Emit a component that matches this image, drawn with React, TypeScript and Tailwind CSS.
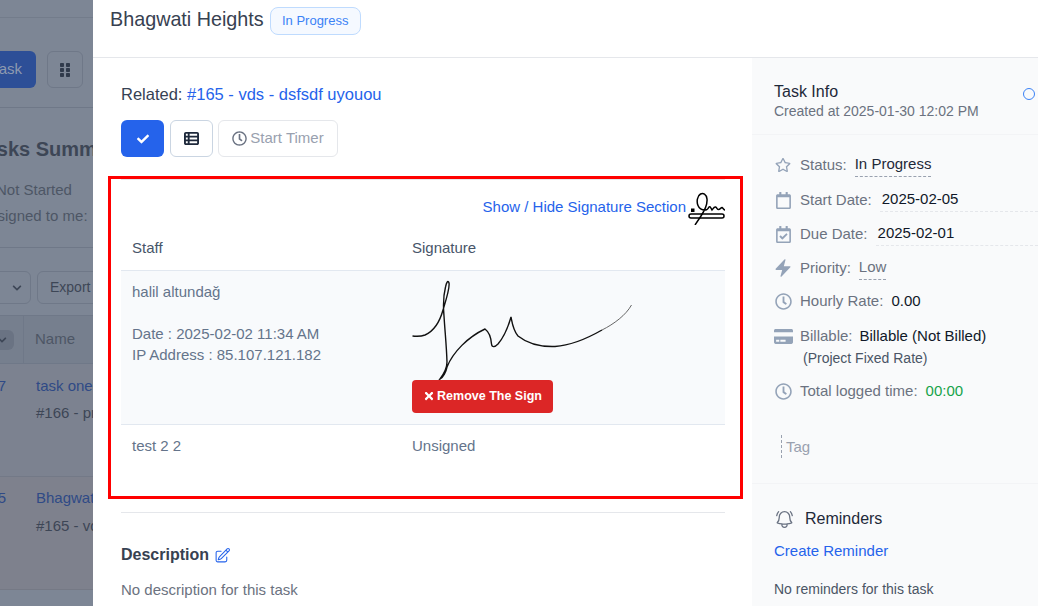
import {
  FaCheck,
  FaChevronDown,
  FaCreditCard,
  FaGripVertical,
  FaRegCalendar,
  FaRegCalendarCheck,
  FaRegClock,
  FaRegStar,
  FaTimes,
} from "react-icons/fa";
import { FaTableList } from "react-icons/fa6";
import { HiBolt, HiOutlineBellAlert, HiOutlinePencilSquare } from "react-icons/hi2";

function PageBehind() {
  return (
    <div className="w-[93px] shrink-0 h-full overflow-hidden bg-[#7d8695] text-[#3d4656] text-[15px]">
      <div className="w-[330px] -ml-[30px] flex flex-col">
        <div className="h-[18px] border-b border-[#737c8b]" />
        <div className="h-[90px] border-b border-[#6f7888] flex items-start pt-[33px] gap-[11px] justify-end pr-[217px]">
          <div className="w-[66px] h-[37px] rounded-md bg-[#2d4f97] text-[#8d9ab0] flex items-center justify-end pr-[14px]">
            Task
          </div>
          <div className="w-[36px] h-[37px] rounded-md border border-[#6f7888] flex items-center justify-center text-[#303a4b]">
            <FaGripVertical size={16} />
          </div>
        </div>
        <div className="h-[140px] border-b border-[#6f7888] pt-[29px]">
          <div className="pl-[5px] text-[20px] font-bold leading-6 whitespace-nowrap">Tasks Summary</div>
          <div className="pl-[26px] mt-[19px] leading-5 text-[#4d5665]">Not Started</div>
          <div className="pl-[10px] mt-[6px] leading-5 text-[#4d5665] whitespace-nowrap">Assigned to me:</div>
        </div>
        <div className="h-[67px] flex items-start pt-[23px] gap-[6px] pl-[4px]">
          <div className="w-[57px] h-[33px] rounded-md border border-[#6f7888] flex items-center justify-end pr-[8px]">
            <FaChevronDown size={10} />
          </div>
          <div className="w-[70px] h-[33px] rounded-md border border-[#6f7888] flex items-center pl-[12px] text-[14px]">
            Export
          </div>
        </div>
        <div className="h-[49px] bg-[#767f8e] border-y border-[#6f7888] flex">
          <div className="w-[54px] border-r border-[#6f7888] flex items-center justify-end pr-[9px]">
            <div className="w-[24px] h-[20px] rounded-md bg-[#6a7383] flex items-center justify-center">
              <FaChevronDown size={10} />
            </div>
          </div>
          <div className="pl-[11px] leading-[45px] text-[#4d5665]">Name</div>
        </div>
        <div className="h-[113px] border-b border-[#737987] bg-[#7c8290] flex pt-[12px]">
          <div className="w-[36px] text-right text-[#2f4a86] leading-5">167</div>
          <div className="pl-[30px] whitespace-nowrap">
            <div className="text-[#2f4a86] leading-5">task one</div>
            <div className="mt-[7px] leading-5">#166 - project</div>
          </div>
        </div>
        <div className="h-[113px] border-b border-[#757985] bg-[#7e818d] flex pt-[11px]">
          <div className="w-[36px] text-right text-[#2f4a86] leading-5">165</div>
          <div className="pl-[30px] whitespace-nowrap">
            <div className="text-[#2f4a86] leading-5">Bhagwati Heights</div>
            <div className="mt-[8px] leading-5">#165 - vds</div>
          </div>
        </div>
      </div>
    </div>
  );
}

function SignatureIcon() {
  return (
    <svg width="37" height="33" viewBox="0 0 37 33" fill="none" stroke="#000" strokeWidth="1.5" className="shrink-0">
      <rect x="1" y="22" width="35" height="4" rx="2" />
      <rect x="3" y="16.5" width="3.5" height="3.5" fill="#000" stroke="none" />
      <path d="M7 33 L13 24 C17 18 19.5 12 19 7 C18.5 2 15 0.5 12.5 2 C9 4 8.5 10 10 13.5 C11 16 14 18 17 18 C19 18.5 20 17 21 15 C22 14 23 16 24 18 C25 17 26 14.5 27.5 15 C29 15.5 29 17.5 30.5 17.5 C32 17.5 33 15.5 34 15.5 C35 16 36 18 37 18" />
    </svg>
  );
}

function SignatureDrawing() {
  return (
    <svg width="222" height="100" viewBox="0 0 222 100" fill="none" stroke="#111" strokeWidth="1.4" className="block">
      <path d="M0.5 56 C5 56.5 9 56.5 13 55 C22 51 28 41 31 30 C34 20 38 8 37 3 C36 0 34.5 2 33.5 7 C31 17 31 25 32 36 C33 52 34.5 66 35 82 C35 89 31 95 28 99 C31 98 34 92 35 87 C41 72 56 57 73 49 C77 52 79 57 79.5 64 C80 68 83 67 86 64 C92 57 97 44 99 37 C100 42 101 50 106 56 C116 64 128 67 143 66.5 C158 65.5 176 58 190 50" />
      <path d="M190 50 C202 44 214 35 219.5 25" stroke="#555" strokeWidth="0.9" />
    </svg>
  );
}

function SignatureBox() {
  return (
    <div className="-ml-[13px] -mr-[18px] mt-[19px] h-[323px] border-[3px] border-[#ff0000] pl-[10px] pr-[15px]">
      <div className="border-t border-gray-200" />
      <div className="h-[45px] flex items-start justify-end pt-[12px] gap-[2px]">
        <a className="text-[15px] leading-5 mt-[5px] text-[#2563eb]">Show / Hide Signature Section</a>
        <SignatureIcon />
      </div>
      <table className="w-full table-fixed text-[15px] text-[#64748b]">
        <thead>
          <tr className="h-[45px] border-b border-[#e2e8f0] text-[#475569]">
            <th className="w-[280px] pl-[11px] pt-[1px] font-normal text-left">Staff</th>
            <th className="pl-[11px] pt-[1px] font-normal text-left">Signature</th>
          </tr>
        </thead>
        <tbody>
          <tr className="bg-[#f8fafc] border-b border-[#e2e8f0]">
            <td className="h-[154px] align-top pl-[11px] pt-[10px] leading-[21px]">
              <div>halil altundağ</div>
              <div className="mt-[21px]">Date : 2025-02-02 11:34 AM</div>
              <div>IP Address : 85.107.121.182</div>
            </td>
            <td className="align-top pl-[11px] pt-[9px]">
              <SignatureDrawing />
              <button className="h-[33px] w-[141px] rounded bg-[#dc2626] text-white text-[12.5px] font-bold flex items-center justify-center gap-[2px]">
                <FaTimes size={12} />
                Remove The Sign
              </button>
            </td>
          </tr>
          <tr>
            <td className="pl-[11px] pt-[10px] leading-[21px] align-top">test 2 2</td>
            <td className="pl-[11px] pt-[10px] leading-[21px] align-top">Unsigned</td>
          </tr>
        </tbody>
      </table>
    </div>
  );
}

function InfoRow({
  icon,
  label,
  children,
  className,
}: {
  icon: React.ReactNode;
  label: string;
  children: React.ReactNode;
  className?: string;
}) {
  return (
    <div className={`h-5 flex items-center whitespace-nowrap ${className ?? ""}`}>
      <div className="w-[18px] mr-[8px] shrink-0 flex justify-center text-[#94a3b8]">{icon}</div>
      <span className="shrink-0 text-[#6b7280]">{label}</span>
      {children}
    </div>
  );
}

function TaskInfo() {
  return (
    <div className="w-[286px] shrink-0 h-full bg-[#f9fafb] text-[15px] overflow-hidden">
      <div className="h-[77px] border-b border-gray-100 pt-[24px] pl-[22px] pr-[3px] flex justify-between">
        <div>
          <div className="text-base leading-5 text-gray-800">Task Info</div>
          <div className="text-sm -mt-[1px] leading-5 text-[#6b7280]">Created at 2025-01-30 12:02 PM</div>
        </div>
        <div className="w-[12px] h-[12px] rounded-full border-[1.5px] border-[#3b82f6] mt-[6px]" />
      </div>
      <div className="pl-[22px] pt-[20px] flex flex-col gap-[14px] h-[349px] border-b border-gray-100">
        <InfoRow icon={<FaRegStar size={16} />} label="Status:" className="mb-[1px]">
          <span className="ml-[8px] text-gray-800 border-b border-dashed border-gray-400">In Progress</span>
        </InfoRow>
        <InfoRow icon={<FaRegCalendar size={17} />} label="Start Date:">
          <span className="ml-[8px] pl-[2px] flex-1 text-gray-900 border-b border-dashed border-gray-200">2025-02-05</span>
        </InfoRow>
        <InfoRow icon={<FaRegCalendarCheck size={17} />} label="Due Date:">
          <span className="ml-[8px] pl-[2px] flex-1 text-gray-900 border-b border-dashed border-gray-200">2025-02-01</span>
        </InfoRow>
        <InfoRow icon={<HiBolt size={20} className="shrink-0" />} label="Priority:">
          <span className="ml-[8px] text-[#6b7280] border-b border-dashed border-gray-400">Low</span>
        </InfoRow>
        <InfoRow icon={<FaRegClock size={17} />} label="Hourly Rate:" className="-mt-[1px] mb-[1px]">
          <span className="ml-[8px] text-gray-900">0.00</span>
        </InfoRow>
        <div>
          <InfoRow icon={<FaCreditCard size={19} className="shrink-0" />} label="Billable:">
            <span className="ml-[7px] text-gray-900">Billable (Not Billed)</span>
          </InfoRow>
          <div className="mt-[2px] h-5 pl-[29px] text-sm leading-5 text-gray-600">(Project Fixed Rate)</div>
        </div>
        <InfoRow icon={<FaRegClock size={17} />} label="Total logged time:" className="-mt-[1px]">
          <span className="ml-[8px] text-[#16a34a]">00:00</span>
        </InfoRow>
        <div className="ml-[7px] mt-[20px] h-[23px] border-l border-dashed border-gray-400 pl-[4px] leading-[23px] text-gray-400">
          Tag
        </div>
      </div>
      <div className="pl-[22px] pt-[23px]">
        <div className="flex items-center h-6 text-base text-gray-800">
          <HiOutlineBellAlert size={21} className="text-gray-500 mr-[10px]" />
          Reminders
        </div>
        <a className="block mt-[10px] leading-5 text-[#2563eb]">Create Reminder</a>
        <div className="mt-[18px] text-sm leading-5 text-gray-600">No reminders for this task</div>
      </div>
    </div>
  );
}

export default function App() {
  return (
    <div className="w-[1038px] h-[606px] flex overflow-hidden font-['Liberation_Sans',Arial,sans-serif]">
      <PageBehind />
      <div className="flex-1 min-w-0 h-full bg-white flex flex-col">
        <div className="h-[58px] shrink-0 border-b border-gray-200 flex items-start pl-[17px] pt-[7px]">
          <h1 className="text-[19.75px] leading-6 text-[#374151]">Bhagwati Heights</h1>
          <span className="ml-[6px] w-[91px] h-[28px] rounded-lg border border-[#bfdbfe] bg-[#f5f9ff] text-[#3b82f6] text-[13px] flex items-center justify-center">
            In Progress
          </span>
        </div>
        <div className="flex flex-1 min-h-0">
          <div className="w-[659px] shrink-0 pl-[28px] pr-[27px] pt-[24px] overflow-hidden">
            <div className="text-[16.5px] leading-6 text-gray-700">
              Related: <a className="text-[#2563eb]">#165 - vds - dsfsdf uyouou</a>
            </div>
            <div className="mt-[14px] flex gap-[6px]">
              <button className="w-[43px] h-[37px] rounded-md bg-[#2563eb] text-white flex items-center justify-center">
                <FaCheck size={12} />
              </button>
              <button className="w-[43px] h-[37px] rounded-md border border-slate-300 text-[#1e293b] flex items-center justify-center">
                <FaTableList size={15} />
              </button>
              <button className="ml-[-1px] w-[120px] h-[37px] rounded-md border border-gray-200 text-gray-400 text-[15px] flex items-center justify-center gap-[3px]">
                <FaRegClock size={15} className="text-gray-500" />
                Start Timer
              </button>
            </div>
            <SignatureBox />
            <div className="mt-[13px] border-t border-gray-200" />
            <div className="mt-[30px] flex items-center text-base font-bold leading-6 text-[#374151]">
              Description
              <HiOutlinePencilSquare size={17} className="ml-[5px] text-[#2563eb]" />
            </div>
            <div className="mt-[13px] text-[15px] leading-5 text-[#6b7280]">No description for this task</div>
          </div>
          <TaskInfo />
        </div>
      </div>
    </div>
  );
}
